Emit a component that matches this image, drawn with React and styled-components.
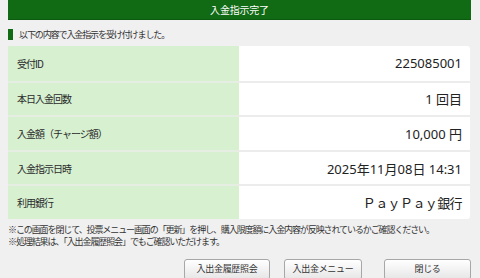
import { Fragment } from "react"
import styled, { createGlobalStyle } from "styled-components"

const GlobalStyle = createGlobalStyle`
  html, body {
    margin: 0;
    padding: 0;
    background: #f0f0f0;
  }
  body {
    font-family: "Noto Sans", "Noto Sans CJK JP", sans-serif;
    color: #333;
  }
`

const StyledPage = styled.div`
  width: 480px;
  height: 278px;
  overflow: hidden;
  padding: 0 10px 0 8px;
  box-sizing: border-box;
`

const StyledHeader = styled.div`
  height: 20px;
  background: #116a14;
  border-bottom: 1px solid #0c5a0f;
  box-sizing: border-box;
  display: flex;
  align-items: center;
  justify-content: center;
  color: #fff;
  font-family: "Noto Sans CJK JP", sans-serif;
  font-size: 10px;
  letter-spacing: -0.2px;
  margin-right: -1px;
`

const StyledIntro = styled.div`
  display: flex;
  align-items: center;
  gap: 6px;
  margin-top: 9px;
  height: 11px;
  font-family: "Noto Sans CJK JP", sans-serif;
  font-size: 9px;
  letter-spacing: -1.1px;
  color: #333;
`

const StyledIntroBar = styled.span`
  width: 5px;
  height: 11px;
  background: #116a14;
`

const StyledTable = styled.div`
  margin-top: 6px;
  display: grid;
  grid-template-columns: 231px 1fr;
  background: #fff;
  border-radius: 0 3px 3px 0;
  overflow: hidden;
`

const StyledLabel = styled.div`
  height: 34.6px;
  box-sizing: border-box;
  display: flex;
  align-items: center;
  padding-left: 9px;
  background: #d6f0d0;
  border-top: ${(p) => (p.$first ? "none" : "2px solid #e6eee4")};
  font-family: "Noto Sans CJK JP", sans-serif;
  font-size: 10px;
  letter-spacing: -1px;
  color: #2a2a2a;
`

const StyledValue = styled.div`
  height: 34.6px;
  box-sizing: border-box;
  display: flex;
  align-items: center;
  justify-content: flex-end;
  padding-right: 8px;
  border-top: ${(p) => (p.$first ? "none" : "2px solid #ececec")};
  font-size: 13px;
  letter-spacing: ${(p) => p.$spacing || "0"};
  color: #222;
`

const StyledNotes = styled.div`
  margin-top: 5px;
  font-family: "Noto Sans CJK JP", sans-serif;
  font-size: 9px;
  line-height: 12px;
  letter-spacing: -1.1px;
  color: #333;
`

const StyledButtons = styled.div`
  display: flex;
  justify-content: flex-end;
  margin-top: 11px;
  margin-right: -1px;
`

const StyledButton = styled.button`
  width: ${(p) => p.$width}px;
  height: 21px;
  margin-left: ${(p) => p.$gap || 0}px;
  padding: 0 0 1px;
  border: 1px solid #a7a7a7;
  border-radius: 3px;
  background: linear-gradient(#ffffff, #e6e6e6);
  font-family: "Noto Sans CJK JP", sans-serif;
  font-size: 9px;
  letter-spacing: -0.3px;
  color: #333;
  display: flex;
  align-items: center;
  justify-content: center;
`

const rows = [
  { label: "受付ID", value: "225085001" },
  { label: "本日入金回数", value: "1 回目" },
  { label: "入金額（チャージ額）", value: "10,000 円" },
  { label: "入金指示日時", value: "2025年11月08日 14:31" },
  { label: "利用銀行", value: "ＰａｙＰａｙ銀行", spacing: "-0.6px" },
]

export default function App() {
  return (
    <StyledPage>
      <GlobalStyle />
      <StyledHeader>入金指示完了</StyledHeader>

      <StyledIntro>
        <StyledIntroBar />
        以下の内容で入金指示を受け付けました。
      </StyledIntro>

      <StyledTable>
        {rows.map((row, i) => (
          <Fragment key={row.label}>
            <StyledLabel $first={i === 0}>{row.label}</StyledLabel>
            <StyledValue $first={i === 0} $spacing={row.spacing}>
              {row.value}
            </StyledValue>
          </Fragment>
        ))}
      </StyledTable>

      <StyledNotes>
        <div>※この画面を閉じて、投票メニュー画面の「更新」を押し、購入限度額に入金内容が反映されているかご確認ください。</div>
        <div>※処理結果は、「入出金履歴照会」でもご確認いただけます。</div>
      </StyledNotes>

      <StyledButtons>
        <StyledButton $width={86}>入出金履歴照会</StyledButton>
        <StyledButton $width={78} $gap={14}>入出金メニュー</StyledButton>
        <StyledButton $width={87} $gap={22}>閉じる</StyledButton>
      </StyledButtons>
    </StyledPage>
  )
}
